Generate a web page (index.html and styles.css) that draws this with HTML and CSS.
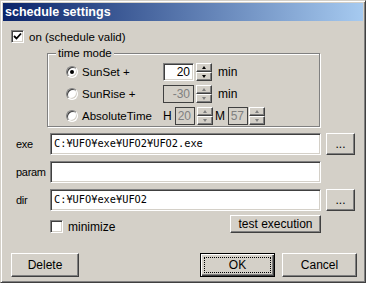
FILE: index.html
```html
<!DOCTYPE html>
<html lang="en">
<head>
    <meta charset="UTF-8">
    <title>schedule settings</title>
    <link rel="stylesheet" href="styles.css">
</head>
<body>
    <div class="window">
        <div class="titlebar">schedule settings</div>

        <div class="content">
            <div class="check-row top-check">
                <span class="checkbox">
                    <svg width="9" height="9" viewBox="0 0 9 9"><path d="M1 4 L3.5 6.5 L8 1.5" fill="none" stroke="#000" stroke-width="1.8"/></svg>
                </span>
                <span>on (schedule valid)</span>
            </div>

            <div class="group">
                <span class="legend">time mode</span>

                <div class="mode-row">
                    <span class="radio-label"><span class="radio on"></span>SunSet +</span>
                    <span class="field wide">20</span>
                    <span class="spin"><span class="up"></span><span class="down"></span></span>
                    <span class="unit">min</span>
                </div>

                <div class="mode-row">
                    <span class="radio-label"><span class="radio"></span>SunRise +</span>
                    <span class="field wide disabled">-30</span>
                    <span class="spin disabled"><span class="up"></span><span class="down"></span></span>
                    <span class="unit">min</span>
                </div>

                <div class="mode-row">
                    <span class="radio-label"><span class="radio"></span>AbsoluteTime</span>
                    <span class="hm">H</span>
                    <span class="field small disabled">20</span>
                    <span class="spin disabled"><span class="up"></span><span class="down"></span></span>
                    <span class="hm m">M</span>
                    <span class="field small disabled">57</span>
                    <span class="spin disabled tight"><span class="up"></span><span class="down"></span></span>
                </div>
            </div>

            <div class="paths">
                <div class="path-row">
                    <span class="path-label">exe</span>
                    <span class="path-input">C:¥UFO¥exe¥UFO2¥UFO2.exe</span>
                    <button class="btn browse">...</button>
                </div>
                <div class="path-row">
                    <span class="path-label">param</span>
                    <span class="path-input"></span>
                </div>
                <div class="path-row">
                    <span class="path-label">dir</span>
                    <span class="path-input">C:¥UFO¥exe¥UFO2</span>
                    <button class="btn browse">...</button>
                </div>
            </div>

            <div class="extra-row">
                <span class="checkbox"></span>
                <span class="extra-label">minimize</span>
                <button class="btn test">test execution</button>
            </div>

            <div class="footer">
                <button class="btn delete">Delete</button>
                <button class="btn default">OK</button>
                <button class="btn cancel">Cancel</button>
            </div>
        </div>
    </div>
</body>
</html>
```

FILE: styles.css
```css
body {
    margin: 0;
    font-family: "Liberation Sans", Arial, sans-serif;
    font-size: 11px;
    color: #000;
    background-color: #d4d0c8;
}

.window {
    width: 366px;
    height: 283px;
    box-sizing: border-box;
    padding: 2px;
    background-color: #d4d0c8;
    border: 1px solid;
    border-color: #d4d0c8 #404040 #404040 #d4d0c8;
    box-shadow: inset 1px 1px 0 #fff, inset -1px -1px 0 #808080;
    display: flex;
    flex-direction: column;
}

.titlebar {
    height: 18px;
    line-height: 18px;
    padding-left: 2px;
    color: #fff;
    font-weight: bold;
    font-size: 12.5px;
    background: linear-gradient(to right, #0a246a, #a6caf0);
}

.content {
    display: flex;
    flex-direction: column;
}

/* checkbox */
.check-row {
    display: flex;
    align-items: center;
    height: 13px;
}

.top-check {
    margin-top: 9px;
    padding-left: 8px;
    font-size: 11.5px;
}

.top-check .checkbox {
    margin-right: 5px;
}

.checkbox {
    flex: none;
    width: 13px;
    height: 13px;
    box-sizing: border-box;
    background-color: #fff;
    border: 1px solid;
    border-color: #808080 #fff #fff #808080;
    box-shadow: inset 1px 1px 0 #404040, inset -1px -1px 0 #d4d0c8;
    display: flex;
    align-items: center;
    justify-content: center;
}

/* group box */
.group {
    position: relative;
    margin: 10px 0 0 44px;
    width: 273px;
    height: 74px;
    box-sizing: border-box;
    border: 1px solid #808080;
    box-shadow: inset 1px 1px 0 #fff, 1px 1px 0 #fff;
    padding: 9px 0 0 18px;
    display: flex;
    flex-direction: column;
    gap: 4px;
    font-size: 11.5px;
}

.legend {
    position: absolute;
    top: -7px;
    left: 8px;
    padding: 0 2px;
    line-height: 13px;
    background-color: #d4d0c8;
}

.mode-row {
    display: flex;
    align-items: center;
    height: 18px;
}

.radio-label {
    flex: none;
    width: 97px;
    display: flex;
    align-items: center;
}

.radio {
    flex: none;
    width: 12px;
    height: 12px;
    box-sizing: border-box;
    margin-right: 4px;
    border-radius: 50%;
    background-color: #fff;
    border: 1px solid;
    border-color: #808080 #fff #fff #808080;
    box-shadow: inset 1px 1px 0 #404040, inset -1px -1px 0 #d4d0c8;
    position: relative;
}

.radio.on::after {
    content: "";
    position: absolute;
    left: 3px;
    top: 3px;
    width: 4px;
    height: 4px;
    border-radius: 50%;
    background-color: #000;
}

.field {
    flex: none;
    height: 18px;
    box-sizing: border-box;
    padding-right: 3px;
    text-align: right;
    line-height: 16px;
    font-size: 12px;
    background-color: #fff;
    border: 1px solid;
    border-color: #808080 #fff #fff #808080;
    box-shadow: inset 1px 1px 0 #404040, inset -1px -1px 0 #d4d0c8;
}

.field.wide {
    width: 31px;
}

.field.small {
    width: 20px;
}

.field.disabled {
    color: #808080;
    background-color: #d4d0c8;
    border-color: #404040;
    box-shadow: none;
}

.spin {
    flex: none;
    width: 16px;
    height: 18px;
    margin-left: 2px;
    display: flex;
    flex-direction: column;
}

.spin.tight {
    margin-left: 1px;
}

.spin .up,
.spin .down {
    flex: 1;
    box-sizing: border-box;
    border: 1px solid;
    border-color: #fff #404040 #404040 #fff;
    box-shadow: inset -1px -1px 0 #808080;
    position: relative;
}

.spin .up::after,
.spin .down::after {
    content: "";
    position: absolute;
    left: 5px;
    top: 2px;
    border-left: 2.5px solid transparent;
    border-right: 2.5px solid transparent;
}

.spin .up::after {
    border-bottom: 3px solid #000;
}

.spin .down::after {
    border-top: 3px solid #000;
}

.spin.disabled .up::after {
    border-bottom-color: #808080;
}

.spin.disabled .down::after {
    border-top-color: #808080;
}

.unit {
    margin-left: 6px;
    font-size: 12px;
}

.hm {
    flex: none;
    width: 12px;
    font-size: 12px;
}

.hm.m {
    width: 13px;
    margin-left: 2px;
}

/* path rows */
.paths {
    margin-top: 6px;
    display: flex;
    flex-direction: column;
    gap: 6px;
}

.path-row {
    display: flex;
    align-items: center;
    height: 22px;
}

.path-label {
    flex: none;
    width: 47px;
    box-sizing: border-box;
    padding-left: 13px;
    font-size: 11px;
    letter-spacing: -0.3px;
}

.path-input {
    flex: none;
    width: 271px;
    height: 22px;
    box-sizing: border-box;
    padding-left: 3px;
    line-height: 19px;
    font-family: "DejaVu Sans Mono", "Liberation Mono", monospace;
    font-size: 10.3px;
    background-color: #fff;
    border: 1px solid;
    border-color: #808080 #fff #fff #808080;
    box-shadow: inset 1px 1px 0 #404040, inset -1px -1px 0 #d4d0c8;
}

/* buttons */
.btn {
    flex: none;
    box-sizing: border-box;
    padding: 0;
    font-family: "Liberation Sans", Arial, sans-serif;
    font-size: 12px;
    color: #000;
    background-color: #d4d0c8;
    border: 1px solid;
    border-color: #fff #404040 #404040 #fff;
    box-shadow: inset -1px -1px 0 #808080;
}

.browse {
    width: 29px;
    height: 22px;
    margin-left: 5px;
    line-height: 14px;
}

.extra-row {
    margin-top: 4px;
    height: 18px;
    display: flex;
    align-items: center;
    padding-left: 47px;
}

.extra-row .checkbox {
    margin-top: 5px;
}

.extra-label {
    margin: 5px 0 0 5px;
    font-size: 12px;
}

.test {
    margin-left: auto;
    margin-right: 42px;
    width: 91px;
    height: 18px;
}

.footer {
    margin-top: 20px;
    display: flex;
    padding-left: 8px;
}

.footer .btn {
    height: 24px;
}

.delete {
    width: 68px;
}

.default {
    margin-left: auto;
    width: 75px;
    border: 1px solid #000;
    box-shadow: inset 1px 1px 0 #fff, inset -1px -1px 0 #404040, inset -2px -2px 0 #808080;
    position: relative;
}

.default::after {
    content: "";
    position: absolute;
    left: 3px;
    top: 3px;
    right: 3px;
    bottom: 3px;
    border: 1px dotted #000;
}

.cancel {
    width: 75px;
    margin-left: 7px;
    margin-right: 6px;
}
```
